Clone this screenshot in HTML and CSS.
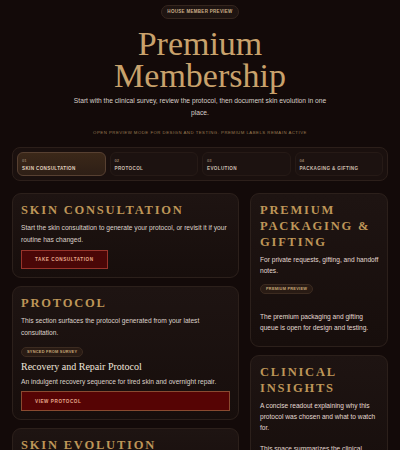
FILE: index.html
```html
<!DOCTYPE html>
<html lang="en">
<head>
<meta charset="utf-8">
<title>Premium Membership</title>
<link rel="stylesheet" href="styles.css">
</head>
<body>
<div class="page">
  <header class="hero">
    <span class="pill pill-top">House member preview</span>
    <h1 class="hero-title">Premium<br>Membership</h1>
    <p class="hero-sub">Start with the clinical survey, review the protocol, then document skin evolution in one place.</p>
    <p class="hero-note">Open preview mode for design and testing. Premium labels remain active</p>
  </header>

  <nav class="tabs">
    <div class="tab active"><span class="tab-num">01</span><span class="tab-label">Skin consultation</span></div>
    <div class="tab"><span class="tab-num">02</span><span class="tab-label">Protocol</span></div>
    <div class="tab"><span class="tab-num">03</span><span class="tab-label">Evolution</span></div>
    <div class="tab"><span class="tab-num">04</span><span class="tab-label">Packaging &amp; gifting</span></div>
  </nav>

  <main class="grid">
    <div class="col">
      <section class="card">
        <h2 class="card-title">Skin consultation</h2>
        <p class="card-text">Start the skin consultation to generate your protocol, or revisit it if your routine has changed.</p>
        <div><button class="btn btn-small">Take consultation</button></div>
      </section>
      <section class="card">
        <h2 class="card-title">Protocol</h2>
        <p class="card-text">This section surfaces the protocol generated from your latest consultation.</p>
        <div><span class="pill pill-tag">Synced from survey</span></div>
        <h3 class="proto-name">Recovery and Repair Protocol</h3>
        <p class="card-text tight">An indulgent recovery sequence for tired skin and overnight repair.</p>
        <button class="btn btn-wide">View protocol</button>
      </section>
      <section class="card">
        <h2 class="card-title">Skin evolution</h2>
        <p class="card-text">Document how your skin changes over time with dated entries and photos.</p>
      </section>
    </div>
    <div class="col">
      <section class="card card-side card-gift">
        <h2 class="card-title">Premium packaging &amp; gifting</h2>
        <p class="card-text">For private requests, gifting, and handoff notes.</p>
        <div><span class="pill pill-tag pill-gift">Premium preview</span></div>
        <p class="card-text gift-note">The premium packaging and gifting queue is open for design and testing.</p>
      </section>
      <section class="card card-side">
        <h2 class="card-title">Clinical insights</h2>
        <p class="card-text">A concise readout explaining why this protocol was chosen and what to watch for.</p>
        <p class="card-text insight-note">This space summarizes the clinical reasoning behind your protocol.</p>
      </section>
    </div>
  </main>
</div>
</body>
</html>
```
FILE: styles.css
```css
* { box-sizing: border-box; }
html, body { margin: 0; padding: 0; }
body {
  background: #130a09;
  color: #ddd2ca;
  font-family: "Liberation Sans", Arial, sans-serif;
  overflow: hidden;
}
.page {
  padding: 5px 12px 0;
}
.hero {
  display: flex;
  flex-direction: column;
  align-items: center;
  text-align: center;
}
.pill {
  display: inline-block;
  border-radius: 999px;
  text-transform: uppercase;
  font-weight: 700;
  white-space: nowrap;
}
.pill-top {
  height: 14px;
  line-height: 12px;
  padding: 0 5px;
  font-size: 4.5px;
  letter-spacing: 0.3px;
  color: #cdb089;
  background: #1e1411;
  border: 1px solid #35261e;
}
.hero-title {
  margin: 9px 0 0;
  font-family: "Liberation Serif", "Times New Roman", serif;
  font-weight: 400;
  font-size: 34px;
  line-height: 32px;
  color: #c9a26c;
}
.hero-sub {
  margin: 3px 0 0;
  max-width: 262px;
  font-size: 6.7px;
  line-height: 12px;
  color: #d8cec8;
}
.hero-note {
  margin: 10px 0 0;
  font-size: 4.3px;
  line-height: 8px;
  letter-spacing: 0.49px;
  text-transform: uppercase;
  color: #9a7a52;
}
.tabs {
  margin-top: 10px;
  display: grid;
  grid-template-columns: repeat(4, minmax(0, 1fr));
  gap: 4px;
  padding: 4px;
  background: #1a100e;
  border: 1px solid #2c1f1a;
  border-radius: 8px;
}
.tab {
  height: 24px;
  padding: 5px 4px 0;
  display: flex;
  flex-direction: column;
  gap: 3px;
  border-radius: 6px;
  background: #1c1210;
  border: 1px solid #261a16;
}
.tab.active {
  background: linear-gradient(180deg, #3b2819, #2e1f16);
  border-color: #574031;
}
.tab-num {
  font-size: 4.2px;
  line-height: 5px;
  font-weight: 700;
  color: #8d7763;
}
.tab-label {
  font-size: 4.6px;
  line-height: 6px;
  font-weight: 700;
  letter-spacing: 0.35px;
  text-transform: uppercase;
  color: #cdbfb1;
}
.tab.active .tab-label { color: #e0d0bf; }
.grid {
  margin-top: 12px;
  display: grid;
  grid-template-columns: 227px minmax(0, 1fr);
  gap: 11px;
  align-items: start;
}
.col {
  display: flex;
  flex-direction: column;
  gap: 8px;
}
.card {
  padding: 8px 8px 8px;
  border-radius: 9px;
  border: 1px solid #2c201b;
  background: linear-gradient(180deg, #1e1412, #170e0c);
}
.card-side {
  padding: 8px 8px 13px 9px;
}
.card-title {
  margin: 0;
  font-family: "Liberation Serif", "Times New Roman", serif;
  font-weight: 700;
  font-size: 12.5px;
  line-height: 16px;
  letter-spacing: 1.8px;
  text-transform: uppercase;
  color: #be9658;
}
.card-text {
  margin: 4px 0 0;
  font-size: 6.65px;
  line-height: 12px;
  color: #ddd2ca;
}
.card-text.tight { margin-top: 2px; }
.card-side .card-text {
  margin-top: 5px;
  font-size: 6.6px;
  line-height: 10.6px;
  color: #e4dad2;
}
.card-side .card-text.gift-note { margin-top: 18px; }
.card-side .card-text.insight-note { margin-top: 11px; }
.btn {
  display: inline-block;
  margin-top: 4px;
  height: 19px;
  padding: 0 13px;
  font-family: "Liberation Sans", Arial, sans-serif;
  font-size: 4.6px;
  font-weight: 700;
  letter-spacing: 0.57px;
  text-transform: uppercase;
  text-align: left;
  color: #e6a98c;
  background: #4a0707;
  border: 1px solid #98342b;
  cursor: pointer;
}
.btn-wide {
  display: block;
  width: 100%;
  height: 20px;
  margin-top: 3px;
  background: #560404;
  border-color: #8a4a30;
}
.pill-tag {
  margin-top: 4px;
  height: 10px;
  line-height: 8px;
  padding: 0 5px;
  font-size: 3.9px;
  letter-spacing: 0.25px;
  color: #c7a777;
  background: #291b14;
  border: 1px solid #3c2b20;
}
.pill-gift { margin-top: 6px; }
.proto-name {
  margin: 3px 0 0;
  font-family: "Liberation Serif", "Times New Roman", serif;
  font-weight: 400;
  font-size: 10px;
  line-height: 14px;
  color: #f0e6dc;
}
```
